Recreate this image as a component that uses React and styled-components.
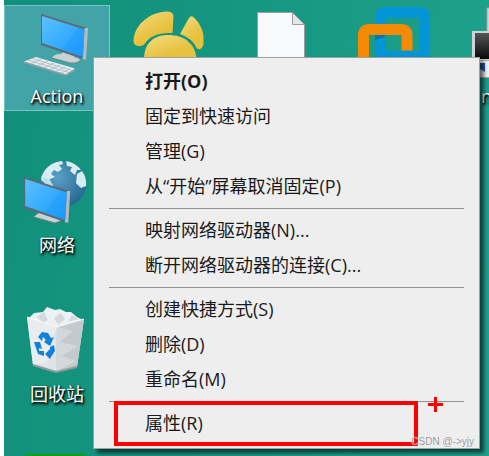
import React from "react";
import styled, { createGlobalStyle, css } from "styled-components";

const GlobalStyle = createGlobalStyle`
  * {
    box-sizing: border-box;
  }
  body {
    margin: 0;
    background: #fff;
    font-family: "Open Sans", "Noto Sans CJK SC", sans-serif;
  }
`;

const Page = styled.div`
  padding-left: 4px;
`;

const Desktop = styled.main`
  position: relative;
  display: flex;
  gap: 6px;
  height: 100vh;
  padding-top: 5px;
  overflow: hidden;
  background: linear-gradient(100deg, #128f7a, #159680 40%, #20a38f);
`;

const Column = styled.div`
  display: flex;
  flex: none;
  flex-direction: column;
  gap: 43px;
  width: 106px;
`;

const Shortcut = styled.button`
  display: flex;
  flex: none;
  flex-direction: column;
  align-items: center;
  gap: 8px;
  height: 106px;
  padding: 6px 0 0;
  border: 1px solid transparent;
  background: none;
  color: #fff;
  font: inherit;
  ${({ $selected }) =>
    $selected &&
    css`
      border: 1px solid #7cc4c2;
      background: #43a4a7;
    `}
`;

const Glyph = styled.svg`
  flex: none;
  width: 64px;
  height: 64px;
  overflow: visible;
`;

const Label = styled.span`
  width: 100%;
  padding-left: ${({ $clipped }) => ($clipped ? "28px" : "0")};
  font-size: 18px;
  line-height: 24px;
  text-align: ${({ $clipped }) => ($clipped ? "left" : "center")};
  text-shadow: 1px 1px 2px #000, 1px 2px 3px #000;
`;

const Menu = styled.div`
  position: absolute;
  top: 57px;
  left: 89px;
  right: 9px;
  padding: 6px 0 7px;
  border: 1px solid #a0a0a0;
  background: #eee;
  box-shadow: 4px 4px 4px rgba(0, 0, 0, 0.6);
`;

const Item = styled.button`
  display: block;
  width: 100%;
  height: 35px;
  padding: 0 0 2px 51px;
  border: 0;
  background: none;
  color: #1a1a1a;
  font: inherit;
  font-size: 18px;
  font-weight: ${({ $bold }) => ($bold ? 700 : 400)};
  line-height: 32px;
  text-align: left;
  white-space: nowrap;
`;

const Separator = styled.hr`
  height: 1px;
  margin: 4px 15px;
  border: 0;
  background: #919191;
`;

const RedFrame = styled.div`
  position: absolute;
  right: 61px;
  bottom: 2px;
  left: 20px;
  height: 45px;
  border: 4px solid #f00;
  pointer-events: none;
`;

const Cursor = styled.svg`
  position: absolute;
  right: 36px;
  bottom: 36px;
  width: 15px;
  height: 15px;
`;

const Watermark = styled.span`
  position: absolute;
  right: 15px;
  bottom: 6px;
  color: #999;
  font-family: "Liberation Sans", Arial, sans-serif;
  font-size: 10px;
  line-height: 16px;
  text-shadow: 0 0 1px #fff;
`;

function Screen() {
  return (
    <>
      <path d="M41 14L87 28L85.500 60L41 45Z" fill="#5c6a73" />
      <path d="M84.500 28L88 28L86 60L82.500 59Z" fill="#b4bcc0" />
      <path d="M42 16L84.500 29.500L83 57L42 43Z" fill="url(#screen)" />
      <path d="M84.500 29.500L83 57L62 50L78 28Z" fill="#1694f5" opacity=".35" />
    </>
  );
}

function ComputerIcon() {
  return (
    <Glyph viewBox="25 12 64 64" aria-hidden="true">
      <defs>
        <linearGradient id="screen" x1="0" y1="0" x2="1" y2="1">
          <stop offset="0" stopColor="#5fc0ff" />
          <stop offset=".5" stopColor="#38aeff" />
          <stop offset="1" stopColor="#1d9bff" />
        </linearGradient>
      </defs>
      <path d="M52 58Q54 54 61 54L64 51L73 54L74 57Q80 58 80 61Q76 64 70 63Z" fill="#c8d2d6" />
      <path d="M52 58L70 63Q76 64 80 61" fill="none" stroke="#6d8288" />
      <Screen />
      <path d="M24 61.500L36 57L75 68.500L66 74.500Z" fill="#e6ebed" />
      <path d="M24 61.500L66 74.500L75 69V70.500L66 76L24 63Z" fill="#8fa2a8" />
      <path
        d="M28 60L69 72.500M32 58.500L72 70.500M31 64L41 59M37 66L48 61M43 68L54 63M49 70L60 65M55 71.500L65 67M61 73L70 69"
        stroke="#a3b1b7"
        strokeWidth=".7"
      />
    </Glyph>
  );
}

function NetworkIcon() {
  return (
    <Glyph viewBox="25 161 64 64" aria-hidden="true">
      <defs>
        <radialGradient id="globe" cx=".4" cy=".35" r=".7">
          <stop offset="0" stopColor="#5b9fc6" />
          <stop offset="1" stopColor="#21678f" />
        </radialGradient>
      </defs>
      <circle cx="63" cy="184" r="23" fill="url(#globe)" />
      <path
        d="M41 178Q46 163 62 161L63 164L59 165L62 169L58 172L54 170L51 174L55 177L50 179L47 183L42 181Z"
        fill="#d6edf4"
      />
      <path
        d="M66 161Q76 163 81 170L77 170L75 175L70 171L72 167L67 166ZM77 174L82 171Q87 178 86 186L81 188L76 183Z"
        fill="#d6edf4"
      />
      <path d="M43 177L50 180L54 187L45 187Z" fill="#bcdde9" />
      <path d="M34 217Q37 213 43 212L46 208L54 211L56 216L65 219L55 223Z" fill="#c8d2d6" />
      <path d="M34 217L55 223L65 219" fill="none" stroke="#6d8288" />
      <g transform="translate(-16 163) scale(.98 1)">
        <Screen />
      </g>
    </Glyph>
  );
}

function RecycleBinIcon() {
  return (
    <Glyph viewBox="25 310 64 64" aria-hidden="true">
      <path
        d="M29 318L34 313L43 312L47 307L55 310L60 309L66 312L71 312L77 317L83 320L60 330Z"
        fill="#eef1f3"
      />
      <path d="M37 317L44 312L48 320L43 323ZM54 318L61 313L65 319L58 325ZM68 322L72 315L78 319Z" fill="#d3dadd" />
      <path d="M27 317L57 327L84 319L77 367L56 372L33 365Z" fill="#dfe3e6" />
      <path d="M57 327L84 319L77 367L56 372Z" fill="#c3c9cd" />
      <path d="M57 327L73 331L60 342L78 346L62 356L76 361L56 372Z" fill="#d3d8db" />
      <path d="M27 317L57 327L53 337L56 352L45 363L33 365Z" fill="#e9edef" />
      <path d="M33 365L56 372L77 367" fill="none" stroke="#8e9b9f" strokeWidth="2" />
      <path d="M27 317L57 327L84 319" fill="none" stroke="#f8fafa" />
      <g fill="#1580d8">
        <path d="M38 337L42 332L48 333L51 338L54 337L50 346L44 342L46 340L43 337L42 341Z" />
        <path d="M34 342L40 342L42 349L39 348L39 351L44 351V356L38 354Z" />
        <path d="M50 347L54 345L55 351L51 357L50 359L45 354L50 349L50 351Z" />
      </g>
    </Glyph>
  );
}

function NavicatIcon() {
  return (
    <Glyph viewBox="137 12 64 64" aria-hidden="true">
      <defs>
        <linearGradient id="gold" x1="0" y1="0" x2=".6" y2="1">
          <stop offset="0" stopColor="#f3dc83" />
          <stop offset=".7" stopColor="#e8c23f" />
        </linearGradient>
      </defs>
      <g fill="url(#gold)">
        <path d="M133.500 40C135 24 150 12 167 11.500Q173 11.500 173.500 16L172.500 33Q152 32 144.500 44Q143 46.500 138 46Q133 45 133.500 40Z" />
        <path d="M180 34L189 18Q191.500 14.500 194.500 18Q205 28 203.500 44Q202 51 197 48.500Q192 38 180 34Z" />
        <path d="M144 62C143 43 154 35 168 35C184 35 196 43 197 62Z" />
      </g>
    </Glyph>
  );
}

function DocumentIcon() {
  return (
    <Glyph viewBox="249 12 64 64" aria-hidden="true">
      <path d="M257.500 12.500H292.500L304.500 24.500V76H257.500Z" fill="#f8f9fb" stroke="#9c9c9c" />
      <path d="M292.500 12.500V24.500H304.500Z" fill="#e4e6e8" stroke="#9c9c9c" />
    </Glyph>
  );
}

function VmwareIcon() {
  return (
    <Glyph viewBox="361 12 64 64" aria-hidden="true">
      <rect x="380.500" y="12.500" width="44" height="44" rx="4" fill="none" stroke="#0495d6" strokeWidth="11" />
      <path d="M375 35H386L382 38L375 40Z" fill="#0576ae" />
      <path
        d="M363.500 70V35Q363.500 29.500 369 29.500H401Q407 29.500 407 35V50.500"
        fill="none"
        stroke="#f58b04"
        strokeWidth="11"
      />
    </Glyph>
  );
}

function WindowsIcon() {
  return (
    <Glyph viewBox="473 12 64 64" aria-hidden="true">
      <defs>
        <linearGradient id="dark" x1="0" y1="0" x2="0" y2="1">
          <stop offset="0" stopColor="#555" />
          <stop offset="1" stopColor="#080808" />
        </linearGradient>
      </defs>
      <path d="M487 8H530V40H487Z" fill="#d2d2d2" stroke="#a5a5a5" />
      <path d="M472 31H520V70H472Z" fill="#d2d2d2" />
      <path d="M475 33H520V59H475Z" fill="url(#dark)" />
      <path d="M478 60.500H500V77.500H478Z" fill="#f2f5f7" stroke="#aaa" />
      <path d="M480 63H485V72L480 69Z" fill="#285fa8" />
    </Glyph>
  );
}

function GreenIcon() {
  return (
    <Glyph viewBox="25 459 64 64" aria-hidden="true">
      <path d="M25 454H86V510H25Z" fill="#12a012" />
    </Glyph>
  );
}

const columns = [
  [
    { id: "computer", label: "Action", Icon: ComputerIcon, selected: true },
    { id: "network", label: "网络", Icon: NetworkIcon },
    { id: "bin", label: "回收站", Icon: RecycleBinIcon },
    { id: "green", Icon: GreenIcon },
  ],
  [{ id: "navicat", Icon: NavicatIcon }],
  [{ id: "document", Icon: DocumentIcon }],
  [{ id: "vmware", Icon: VmwareIcon }],
  [{ id: "windows", label: "n", Icon: WindowsIcon, clipped: true }],
];

const groups = [
  ["打开(O)", "固定到快速访问", "管理(G)", "从“开始”屏幕取消固定(P)"],
  ["映射网络驱动器(N)...", "断开网络驱动器的连接(C)..."],
  ["创建快捷方式(S)", "删除(D)", "重命名(M)"],
  ["属性(R)"],
];

function App() {
  return (
    <Page>
      <GlobalStyle />
      <Desktop>
        {columns.map((column, idx) => (
          <Column key={idx}>
            {column.map(({ id, label, Icon, selected, clipped }) => (
              <Shortcut key={id} type="button" aria-label={label || id} $selected={selected}>
                <Icon />
                {label && <Label $clipped={clipped}>{label}</Label>}
              </Shortcut>
            ))}
          </Column>
        ))}

        <Menu role="menu">
          {groups.map((items, idx) => (
            <React.Fragment key={idx}>
              {idx > 0 && <Separator />}
              {items.map((item, i) => (
                <Item key={item} type="button" role="menuitem" $bold={idx === 0 && i === 0}>
                  {item}
                </Item>
              ))}
            </React.Fragment>
          ))}
          <RedFrame />
          <Cursor viewBox="0 0 15 15" aria-hidden="true">
            <path d="M7.500 0V15M0 7.500H15" stroke="#f00" strokeWidth="3" />
          </Cursor>
        </Menu>
        <Watermark>CSDN @-&gt;yjy</Watermark>
      </Desktop>
    </Page>
  );
}

export default App;
